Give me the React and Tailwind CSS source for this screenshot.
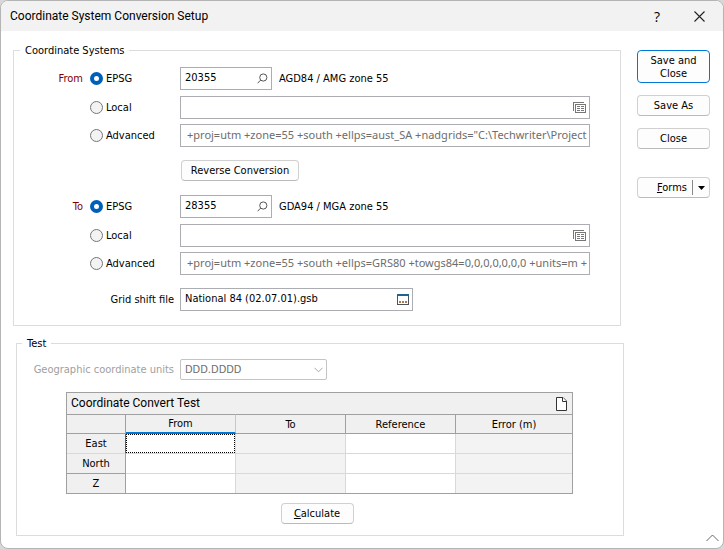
import { useState } from 'react';
import clsx from 'clsx';

function SearchIcon() {
  return (
    <svg width="11" height="11" viewBox="0 0 11 11" fill="none" stroke="#555" strokeWidth="1">
      <circle cx="6.3" cy="4.5" r="3.6" />
      <path d="M3.7 7.1 L0.5 10.3" />
    </svg>
  );
}

function ListIcon() {
  return (
    <svg width="13" height="11" viewBox="0 0 13 11" fill="none" stroke="#777" strokeWidth="1" shapeRendering="crispEdges">
      <path d="M0.5 9 V0.5 H11" />
      <rect x="2.5" y="2.5" width="10" height="8" />
      <path d="M4 4.5h3M8 4.5h3M4 6.5h3M8 6.5h3M4 8.5h3M8 8.5h3" />
    </svg>
  );
}

function BrowseIcon() {
  return (
    <svg width="12" height="11" viewBox="0 0 12 11" shapeRendering="crispEdges">
      <rect x="0.5" y="0.5" width="11" height="10" fill="#fff" stroke="#4a5560" />
      <rect x="0" y="0" width="12" height="2" fill="#1f6391" />
      <path d="M2 7h2v2h-2zM5 7h2v2h-2zM8 7h2v2h-2z" fill="#a87b4f" />
    </svg>
  );
}

function PageIcon() {
  return (
    <svg width="11" height="14" viewBox="0 0 11 14" fill="#fff" stroke="#333" strokeWidth="1">
      <path d="M0.5 0.5 H7 L10.5 4 V13.5 H0.5 Z" />
      <path d="M6.5 0.5 V4.5 H10.5" />
    </svg>
  );
}

function Button({ children, className, primary }) {
  return (
    <button
      type="button"
      className={clsx(
        'rounded border bg-[#fdfdfd] leading-[13px]',
        primary ? 'border-[#0078d4]' : 'border-[#d0d0d0] border-b-[#bbb]',
        className
      )}
    >
      {children}
    </button>
  );
}

function Field({ label, value, icon, iconLabel, muted, className }) {
  return (
    <div className={clsx('flex h-[23px] items-center border border-[#abadb3] bg-white', className)}>
      <input
        type="text"
        aria-label={label}
        defaultValue={value}
        className={clsx(
          'h-full min-w-0 flex-1 pb-0.5 outline-none',
          muted ? 'mr-0.5 pl-1.5 font-[Noto_Sans,sans-serif] text-[#6d6d6d]' : 'pl-1'
        )}
      />
      {icon && (
        <button type="button" aria-label={iconLabel} className="mr-[3px] ml-1 shrink-0">
          {icon}
        </button>
      )}
    </div>
  );
}

function RadioOption({ name, label, checked, onChange }) {
  return (
    <label className="flex w-[90px] shrink-0 items-center gap-[3px]">
      <input
        type="radio"
        name={name}
        checked={checked}
        onChange={onChange}
        className="size-[13px] appearance-none rounded-full border border-[#767676] bg-[#f3f3f3] checked:border-4 checked:border-[#005fb8] checked:bg-white"
      />
      {label}
    </label>
  );
}

function SystemGroup({ title, code, description, projection }) {
  const [mode, setMode] = useState('EPSG');

  const option = (label) => (
    <RadioOption name={title} label={label} checked={mode === label} onChange={() => setMode(label)} />
  );

  return (
    <div role="radiogroup" aria-label={title}>
      <div className="mb-1.5 flex items-center">
        <span className="mr-[7px] w-[69px] shrink-0 text-right text-[#800000]">{title}</span>
        {option('EPSG')}
        <Field
          label={`${title} EPSG code`}
          value={code}
          icon={<SearchIcon />}
          iconLabel="Search"
          className="w-[92px]"
        />
        <span className="ml-[7px]">{description}</span>
      </div>
      <div className="mb-[5px] flex items-center pl-[76px]">
        {option('Local')}
        <Field
          label={`${title} local system`}
          value=""
          icon={<ListIcon />}
          iconLabel="Choose from list"
          className="flex-1"
        />
      </div>
      <div className="flex items-center pl-[76px]">
        {option('Advanced')}
        <Field label={`${title} projection string`} value={projection} muted className="flex-1" />
      </div>
    </div>
  );
}

const rows = ['East', 'North', 'Z'];
const columns = ['From', 'To', 'Reference', 'Error (m)'];
const editable = ['From', 'Reference'];

function ConvertTable() {
  return (
    <div className="mr-[50px] ml-[49px] border border-[#a0a0a0]">
      <div className="flex h-[21px] items-center justify-between bg-[#f0f0f0] pr-[5px] pl-1">
        <span id="convert-test" className="font-[Roboto,sans-serif] text-[12px]">
          Coordinate Convert Test
        </span>
        <button type="button" aria-label="Clear">
          <PageIcon />
        </button>
      </div>
      <table aria-labelledby="convert-test" className="w-full table-fixed border-separate border-spacing-0">
        <thead>
          <tr className="h-5 bg-[#f0f0f0]">
            <td className="w-[59px] border-y border-r border-[#a0a0a0]" />
            {columns.map((col) => (
              <th
                key={col}
                scope="col"
                className={clsx(
                  'border-t border-[#a0a0a0] p-0 font-normal',
                  col !== 'Error (m)' && 'w-[110px] border-r',
                  col === 'From' ? 'border-r-[#c8c8c8] border-b-2 border-b-[#0078d7]' : 'border-b'
                )}
              >
                {col}
              </th>
            ))}
          </tr>
        </thead>
        <tbody>
          {rows.map((row, i) => (
            <tr key={row} className={i < 2 ? 'h-5' : 'h-[19px]'}>
              <th
                scope="row"
                className={clsx(
                  'border-r border-[#a0a0a0] bg-[#f0f0f0] p-0 font-normal',
                  i < 2 && 'border-b',
                  i === 0 && 'border-r-[#0078d7] border-b-[#d9d9d9]'
                )}
              >
                {row}
              </th>
              {columns.map((col) => (
                <td
                  key={col}
                  className={clsx(
                    'border-[#d9d9d9] p-0',
                    i < 2 && 'border-b',
                    col !== 'Error (m)' && 'border-r',
                    !editable.includes(col) && 'bg-[#f3f3f3]'
                  )}
                >
                  {editable.includes(col) && (
                    <input
                      type="text"
                      aria-label={`${row} ${col}`}
                      className={clsx(
                        'block h-[19px] w-full px-1 outline-none',
                        i === 0 && col === 'From' && 'border border-dotted border-black'
                      )}
                    />
                  )}
                </td>
              ))}
            </tr>
          ))}
        </tbody>
      </table>
    </div>
  );
}

export default function App() {
  return (
    <div className="min-h-screen bg-[#d8d8d8] font-['DejaVu_Sans_Condensed','DejaVu_Sans',sans-serif] text-[11px] leading-[15px] text-black">
      <div className="flex min-h-screen flex-col overflow-hidden rounded-lg border border-[#b4b4b4] bg-white">
        <header className="flex h-[30px] items-center justify-between bg-[#f2f2f2] pr-[18px] pl-[9px]">
          <h1 className="font-[Roboto,sans-serif] text-[12px]">Coordinate System Conversion Setup</h1>
          <div className="flex items-center gap-[34px]">
            <button type="button" aria-label="Help" className="font-[Open_Sans,sans-serif] text-[14px]">
              ?
            </button>
            <button type="button" aria-label="Close window">
              <svg width="11" height="11" viewBox="0 0 11 11" stroke="#222" strokeWidth="1.1">
                <path d="M0.5 0.5 L10.5 10.5 M10.5 0.5 L0.5 10.5" />
              </svg>
            </button>
          </div>
        </header>

        <main className="flex flex-1 gap-[13px] pt-3 pl-3">
          <div className="min-w-0 flex-1 pb-3">
            <fieldset className="mr-[3px] border border-[#dcdcdc] pt-[9px] pr-[30px] pb-3.5">
              <legend className="ml-1.5 px-[5px]">Coordinate Systems</legend>
              <SystemGroup
                title="From"
                code="20355"
                description="AGD84 / AMG zone 55"
                projection={'+proj=utm +zone=55 +south +ellps=aust_SA +nadgrids="C:\\Techwriter\\Projects\\National 84 (02.07.01).gsb"'}
              />
              <div className="mt-[13px] mb-3.5 flex pl-[167px]">
                <Button className="h-[21px] w-[118px]">Reverse Conversion</Button>
              </div>
              <SystemGroup
                title="To"
                code="28355"
                description="GDA94 / MGA zone 55"
                projection="+proj=utm +zone=55 +south +ellps=GRS80 +towgs84=0,0,0,0,0,0,0 +units=m +no_defs"
              />
              <div className="mt-[13px] flex items-center">
                <span className="mr-1.5 w-40 text-right">Grid shift file</span>
                <Field
                  label="Grid shift file"
                  value="National 84 (02.07.01).gsb"
                  icon={<BrowseIcon />}
                  iconLabel="Browse"
                  className="w-[233px]"
                />
              </div>
            </fieldset>

            <fieldset className="mt-2.5 ml-[3px] border border-[#dcdcdc] pt-2 pb-[11px]">
              <legend className="ml-[5px] px-[5px]">Test</legend>
              <div className="mb-3 flex items-center">
                <label htmlFor="units" className="mr-1.5 w-[157px] text-right text-[#a0a0a0]">
                  Geographic coordinate units
                </label>
                <div className="relative">
                  <select
                    id="units"
                    disabled
                    className="block h-[21px] w-[147px] appearance-none rounded-xs border border-[#c4c4c4] bg-white pl-1 text-[#6d6d6d]"
                  >
                    <option>DDD.DDDD</option>
                  </select>
                  <svg
                    className="pointer-events-none absolute top-2 right-1"
                    width="9"
                    height="6"
                    viewBox="0 0 9 6"
                    fill="none"
                    stroke="#a8a8a8"
                  >
                    <path d="M0.5 0.8 L4.5 4.8 L8.5 0.8" />
                  </svg>
                </div>
              </div>
              <ConvertTable />
              <div className="mt-[9px] flex justify-center pr-1.5">
                <Button className="h-[21px] w-[73px]">
                  <u>C</u>alculate
                </Button>
              </div>
            </fieldset>
          </div>

          <aside className="flex flex-col pt-[7px] pr-1 pb-1.5">
            <div className="mr-[9px] flex w-[73px] flex-col gap-3">
              <Button primary className="h-[33px] px-2">
                Save and Close
              </Button>
              <Button className="h-[21px]">Save As</Button>
              <Button className="h-[21px]">Close</Button>
              <Button className="mt-4 flex h-[21px] items-center justify-end gap-[5px] pr-1">
                <span>
                  <u>F</u>orms
                </span>
                <span className="h-[15px] w-px bg-[#888]" />
                <svg width="7" height="4" viewBox="0 0 7 4">
                  <path d="M0 0 H7 L3.5 4 Z" />
                </svg>
              </Button>
            </div>
            <button type="button" aria-label="Collapse" className="mt-auto self-end">
              <svg width="13" height="8" viewBox="0 0 13 8" fill="none" stroke="#666">
                <path d="M0.5 7 L6.5 1 L12.5 7" />
              </svg>
            </button>
          </aside>
        </main>
      </div>
    </div>
  );
}
